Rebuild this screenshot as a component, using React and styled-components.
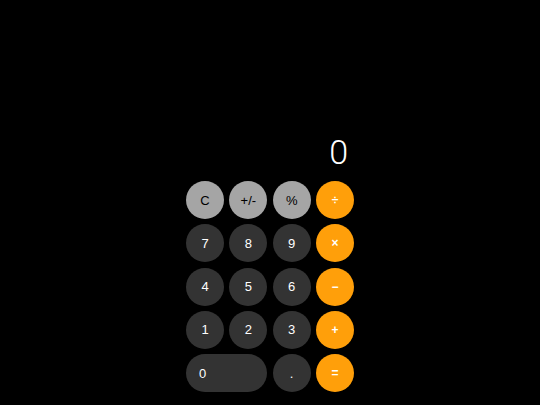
import styled, { createGlobalStyle } from "styled-components";

const GlobalStyle = createGlobalStyle`
  html, body {
    margin: 0;
    padding: 0;
    background: #000;
  }
`;

const Page = styled.div`
  width: 540px;
  height: 405px;
  background: #000;
  display: flex;
  flex-direction: column;
  justify-content: flex-end;
  align-items: center;
  padding-bottom: 12.7px;
  box-sizing: border-box;
`;

const Calculator = styled.div`
  width: 168px;
  display: flex;
  flex-direction: column;
`;

const Display = styled.div`
  color: #fff;
  font-family: Roboto, "Liberation Sans", sans-serif;
  font-weight: 300;
  font-size: 34px;
  line-height: 36px;
  text-align: right;
  padding-right: 6px;
  margin-bottom: 11.5px;
`;

const Keys = styled.div`
  display: grid;
  grid-template-columns: repeat(4, 38px);
  grid-auto-rows: 38px;
  column-gap: 5.33px;
  row-gap: 5.33px;
`;

const colors = {
  fn: { bg: "#a5a5a5", fg: "#000" },
  num: { bg: "#333333", fg: "#fff" },
  op: { bg: "#ff9f0a", fg: "#fff" },
};

const Key = styled.button`
  border: none;
  padding: 0;
  margin: 0;
  border-radius: 19px;
  background: ${(p) => colors[p.kind].bg};
  color: ${(p) => colors[p.kind].fg};
  font-family: "Liberation Sans", Arial, sans-serif;
  font-size: ${(p) => (p.kind === "op" ? "12px" : "13px")};
  font-weight: ${(p) => (p.kind === "op" ? "bold" : "normal")};
  display: flex;
  align-items: center;
  justify-content: ${(p) => (p.wide ? "flex-start" : "center")};
  padding-left: ${(p) => (p.wide ? "13px" : "0")};
  grid-column: ${(p) => (p.wide ? "span 2" : "auto")};
  cursor: pointer;
`;

const keys = [
  ["C", "fn"],
  ["+/-", "fn"],
  ["%", "fn"],
  ["÷", "op"],
  ["7", "num"],
  ["8", "num"],
  ["9", "num"],
  ["×", "op"],
  ["4", "num"],
  ["5", "num"],
  ["6", "num"],
  ["−", "op"],
  ["1", "num"],
  ["2", "num"],
  ["3", "num"],
  ["+", "op"],
  ["0", "num", true],
  [".", "num"],
  ["=", "op"],
];

const App = () => {
  return (
    <>
      <GlobalStyle />
      <Page>
        <Calculator>
          <Display>0</Display>
          <Keys>
            {keys.map(([label, kind, wide]) => (
              <Key key={label} kind={kind} wide={wide}>
                {label}
              </Key>
            ))}
          </Keys>
        </Calculator>
      </Page>
    </>
  );
};

export default App;
